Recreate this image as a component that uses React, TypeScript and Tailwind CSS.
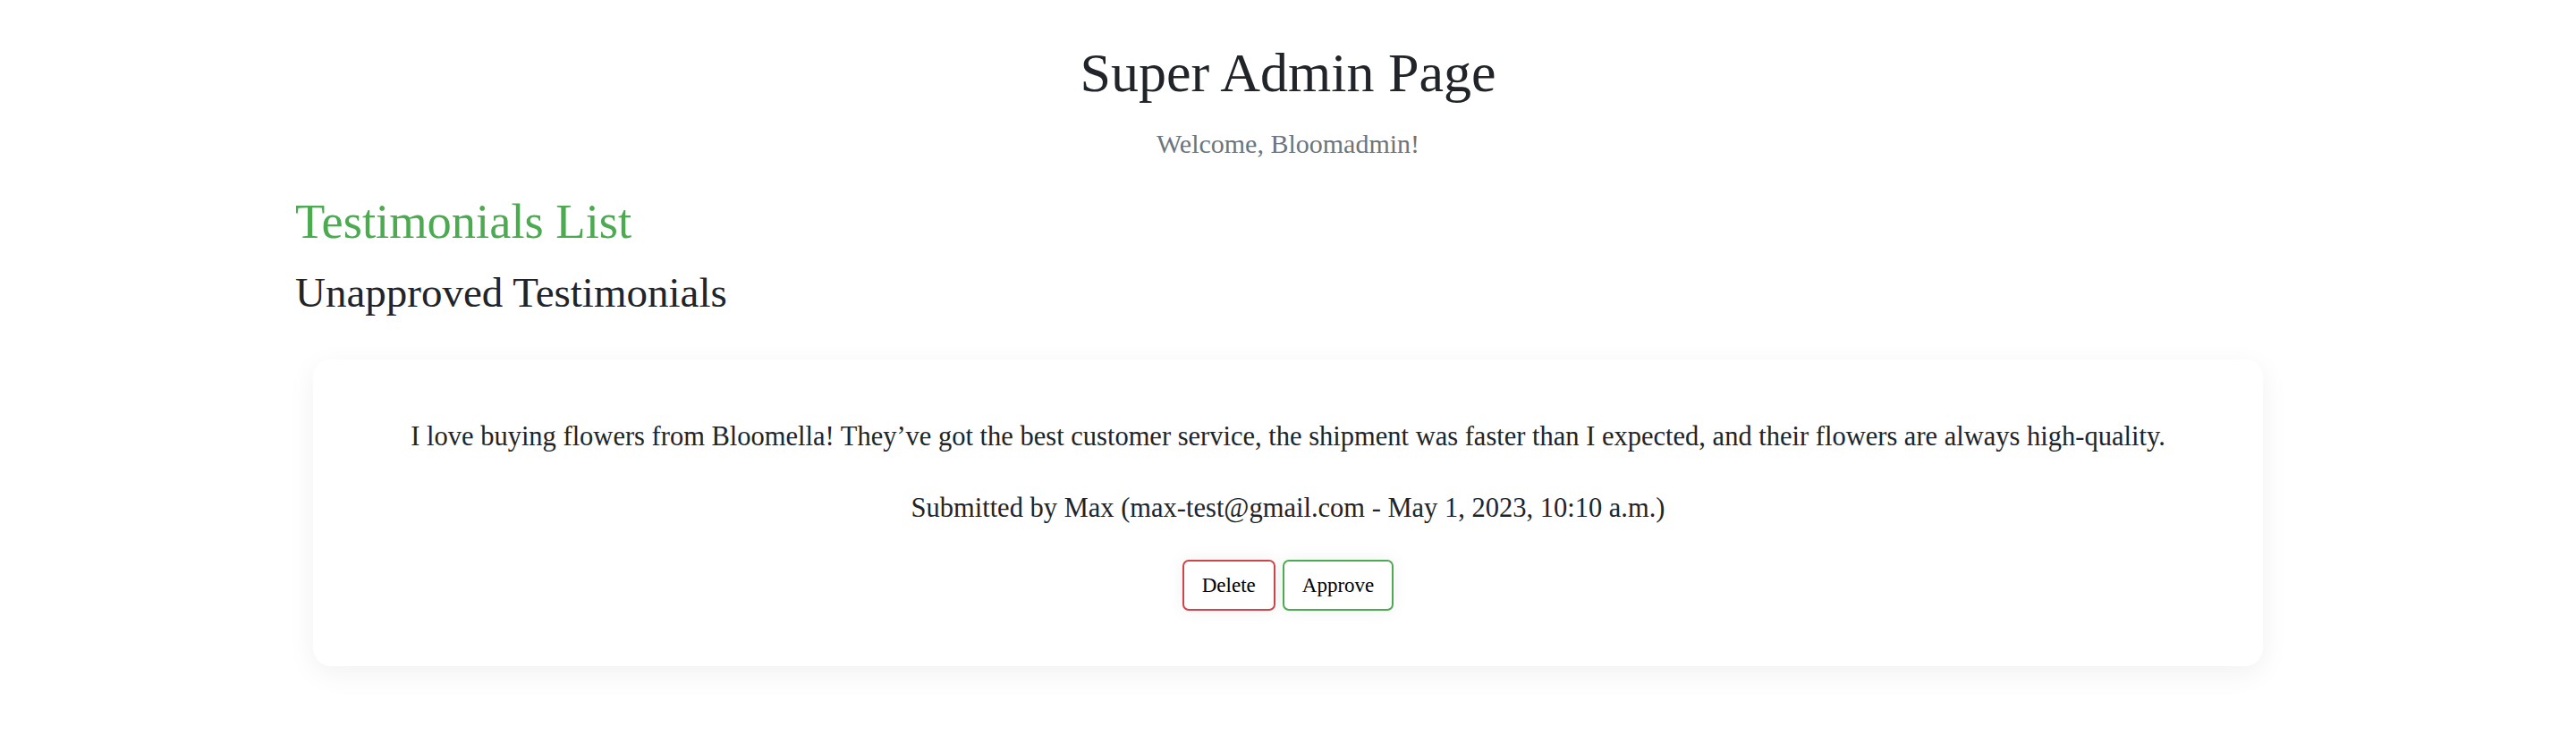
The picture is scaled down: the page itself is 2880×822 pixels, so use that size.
import React from "react";

export default function App() {
  return (
    <div className="min-h-screen bg-white font-['Liberation_Serif',serif] text-[#212529]">
      <header className="pt-[44px] text-center">
        <h1 className="text-[62px] leading-[1.2] font-normal">Super Admin Page</h1>
        <p className="mt-[25px] text-[30px] leading-[1.2] text-[#6c757d]">Welcome, Bloomadmin!</p>
      </header>
      <main className="mx-auto w-[2220px]">
        <h2 className="mt-[36px] text-[54.5px] leading-[1.2] font-normal text-[#4caa50]">Testimonials List</h2>
        <h3 className="mt-[18px] text-[47px] leading-[1.2] font-normal">Unapproved Testimonials</h3>
        <div className="mx-[20px] mt-[47px] rounded-[20px] bg-white px-[60px] pt-[68px] pb-[62px] text-center shadow-[0_8px_32px_rgba(0,0,0,0.06)]">
          <p className="text-[30.5px] leading-[1.2]">
            I love buying flowers from Bloomella! They’ve got the best customer service, the shipment was faster than I expected, and their flowers are always high-quality.
          </p>
          <p className="mt-[43px] text-[30.5px] leading-[1.2]">
            Submitted by Max (max-test@gmail.com - May 1, 2023, 10:10 a.m.)
          </p>
          <div className="mt-[40px] flex justify-center gap-[8px]">
            <button className="flex h-[57px] items-center rounded-[7px] border-2 border-[#cf4446] bg-white px-[20px] text-[23px] text-black shadow-[0_0_20px_rgba(0,0,0,0.06)]">
              Delete
            </button>
            <button className="flex h-[57px] items-center rounded-[7px] border-2 border-[#4caa50] bg-white px-[20px] text-[23px] text-black shadow-[0_0_20px_rgba(0,0,0,0.06)]">
              Approve
            </button>
          </div>
        </div>
      </main>
    </div>
  );
}
